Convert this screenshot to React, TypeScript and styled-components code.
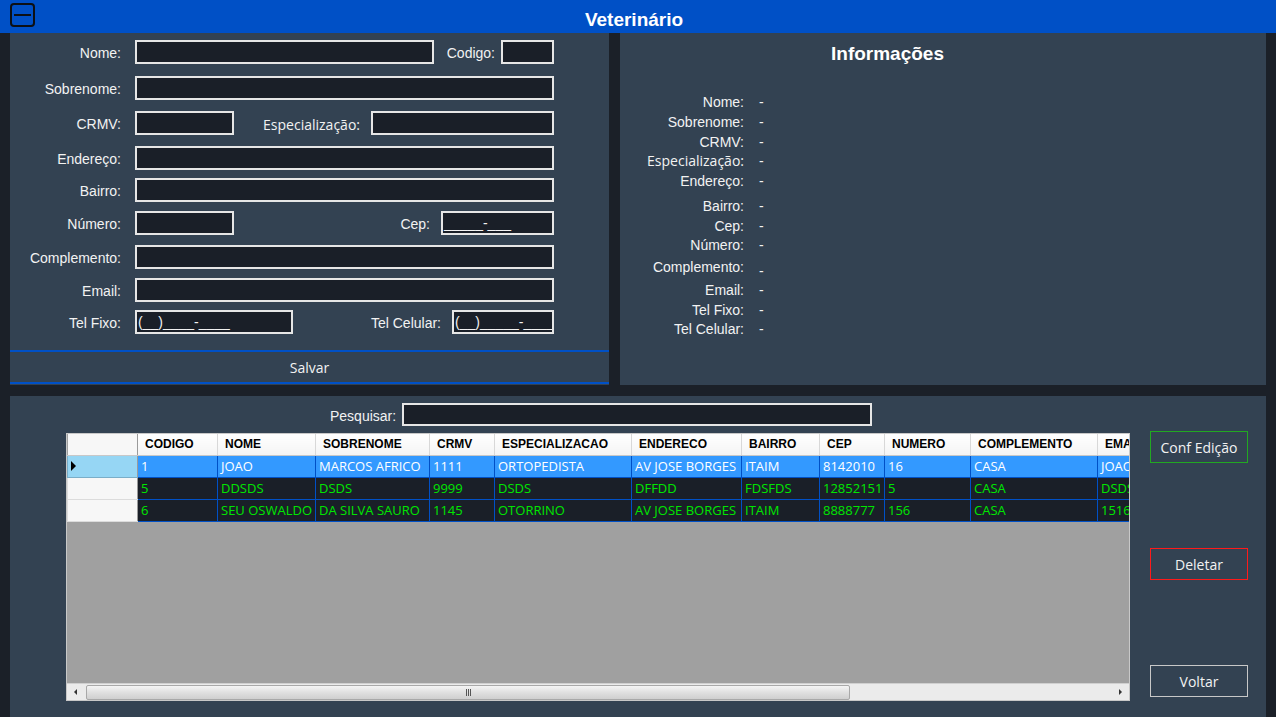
import React from "react";
import styled, { createGlobalStyle } from "styled-components";

const Global = createGlobalStyle`
  html, body { margin: 0; padding: 0; background: #1b2028; }
  body { width: 1276px; height: 717px; overflow: hidden; font-family: "Liberation Sans", Arial, sans-serif; }
  * { box-sizing: border-box; }
`;

const Window = styled.div`
  width: 1276px;
  height: 717px;
  background: #1b2028;
  display: flex;
  flex-direction: column;
`;

const TitleBar = styled.div`
  height: 33px;
  background: #0050c6;
  display: grid;
  grid-template-columns: 1fr auto 1fr;
  align-items: center;
`;

const TitleText = styled.div`
  color: #fff;
  font-weight: bold;
  font-size: 19px;
  padding-right: 8px;
  padding-top: 6px;
`;

const MinBtn = styled.div`
  margin-left: 10px;
  width: 25px;
  height: 24px;
  border: 2px solid #0d1014;
  border-radius: 4px;
  display: flex;
  align-items: center;
  justify-content: center;
  align-self: start;
  margin-top: 3px;
`;

const MinLine = styled.div`
  width: 17px;
  height: 2px;
  background: #0d1014;
`;

const Content = styled.div`
  flex: 1;
  display: flex;
  flex-direction: column;
  padding: 0 10px;
  gap: 11px;
`;

const TopRow = styled.div`
  display: flex;
  gap: 11px;
  height: 352px;
`;

const Panel = styled.div`
  background: #334252;
`;

const FormPanel = styled(Panel)`
  width: 599px;
  display: flex;
  flex-direction: column;
`;

const FormRow = styled.div<{ $mt: number }>`
  display: flex;
  align-items: center;
  height: 24px;
  margin-top: ${(p) => p.$mt}px;
`;

const Label = styled.div`
  width: 111px;
  text-align: right;
  color: #f2f2f2;
  font-size: 14px;
  margin-right: 14px;
  padding-top: 2px;
  white-space: nowrap;
`;

const InputArea = styled.div`
  width: 419px;
  display: flex;
  align-items: center;
  justify-content: space-between;
`;

const Group = styled.div<{ $gap: number }>`
  display: flex;
  align-items: center;
  gap: ${(p) => p.$gap}px;
`;

const InlineLabel = styled.span<{ $alt?: boolean }>`
  color: #f2f2f2;
  font-size: 14px;
  padding-top: 2px;
  font-family: ${(p) => (p.$alt ? `"Open Sans", "Noto Sans", sans-serif` : `"Liberation Sans", Arial, sans-serif`)};
  white-space: nowrap;
`;

const Field = styled.div<{ $w?: number }>`
  width: ${(p) => (p.$w ? `${p.$w}px` : "100%")};
  height: 24px;
  background: #1a1f28;
  border: 2px solid #e6e6e6;
  color: #f2f2f2;
  font-size: 14px;
  line-height: 20px;
  padding-left: 1px;
  white-space: nowrap;
  overflow: hidden;
`;

const SaveButton = styled.div`
  margin-top: auto;
  margin-bottom: 1px;
  height: 34px;
  border-top: 2px solid #0050c6;
  border-bottom: 2px solid #0050c6;
  display: flex;
  align-items: center;
  justify-content: center;
  color: #f2f2f2;
  font-family: "Open Sans", "Noto Sans", sans-serif;
  font-size: 14px;
`;

const InfoPanel = styled(Panel)`
  flex: 1;
  display: flex;
  flex-direction: column;
`;

const InfoTitle = styled.div`
  margin-top: 10px;
  padding-left: 211px;
  height: 22px;
  line-height: 22px;
  color: #fff;
  font-weight: bold;
  font-size: 19px;
`;

const InfoList = styled.div`
  margin-top: 29px;
  display: flex;
  flex-direction: column;
`;

const InfoRow = styled.div<{ $mt: number }>`
  display: flex;
  height: 16px;
  line-height: 16px;
  margin-top: ${(p) => p.$mt}px;
`;

const InfoLabel = styled.div<{ $alt?: boolean }>`
  width: 124px;
  text-align: right;
  color: #f2f2f2;
  font-size: 14px;
  font-family: ${(p) => (p.$alt ? `"Open Sans", "Noto Sans", sans-serif` : `"Liberation Sans", Arial, sans-serif`)};
  white-space: nowrap;
`;

const InfoValue = styled.div<{ $low?: boolean }>`
  margin-left: 15px;
  color: #f2f2f2;
  font-size: 14px;
  transform: translateY(${(p) => (p.$low ? 4 : 0)}px);
`;

const BottomPanel = styled(Panel)`
  flex: 1;
  display: flex;
  padding-left: 56px;
`;

const GridColumn = styled.div`
  width: 1064px;
  display: flex;
  flex-direction: column;
  padding-top: 7px;
`;

const SearchRow = styled.div`
  display: flex;
  align-items: center;
  padding-left: 264px;
  gap: 6px;
  height: 23px;
`;

const SearchField = styled(Field)`
  height: 23px;
`;

const GridBox = styled.div`
  margin-top: 7px;
  height: 268px;
  border: 1px solid #c8c8c8;
  display: flex;
  flex-direction: column;
  background: #a0a0a0;
`;

const TableArea = styled.div`
  flex: 1;
  overflow: hidden;
`;

const Table = styled.table`
  border-collapse: collapse;
  table-layout: fixed;
  width: 1180px;
`;

const HeadCell = styled.th`
  height: 21px;
  padding: 0 0 0 7px;
  text-align: left;
  font-family: "Liberation Sans", Arial, sans-serif;
  font-weight: bold;
  font-size: 12px;
  color: #000;
  background: linear-gradient(#ffffff, #f4f4f4);
  border-right: 1px solid #d8d8d8;
  border-bottom: 1px solid #c8c8c8;
  white-space: nowrap;
  overflow: hidden;
`;

const CornerCell = styled.th`
  background: #f7f7f7;
  border-right: 1px solid #9a9a9a;
  border-bottom: 1px solid #c8c8c8;
`;

const RowHead = styled.td<{ $sel?: boolean }>`
  height: 22px;
  padding: 0 0 0 3px;
  background: ${(p) => (p.$sel ? "#96d6f4" : "#f7f7f7")};
  border: 1px solid ${(p) => (p.$sel ? "#7aaec8" : "#dcdcdc")};
  border-right: 1px solid #9a9a9a;
  vertical-align: middle;
`;

const Cell = styled.td<{ $sel?: boolean }>`
  height: 22px;
  padding: 0 0 0 3px;
  border: 1px solid #0050c6;
  background: ${(p) => (p.$sel ? "#3399ff" : "#1a1f28")};
  color: ${(p) => (p.$sel ? "#ffffff" : "#00e600")};
  font-family: "Open Sans", "Noto Sans", sans-serif;
  font-size: 13px;
  line-height: 18px;
  white-space: nowrap;
  overflow: hidden;
`;

const Arrow = styled.div`
  width: 0;
  height: 0;
  border-top: 5px solid transparent;
  border-bottom: 5px solid transparent;
  border-left: 5px solid #000;
`;

const ScrollBar = styled.div`
  height: 17px;
  background: #ebebeb;
  border-top: 1px solid #d0d0d0;
  display: flex;
  align-items: center;
`;

const ScrollBtn = styled.div`
  width: 17px;
  height: 16px;
  display: flex;
  align-items: center;
  justify-content: center;
`;

const Tri = styled.div<{ $dir: "l" | "r" }>`
  width: 0;
  height: 0;
  border-top: 3px solid transparent;
  border-bottom: 3px solid transparent;
  ${(p) => (p.$dir === "l" ? "border-right: 3px solid #333;" : "border-left: 3px solid #333;")}
`;

const Thumb = styled.div`
  margin-left: 2px;
  width: 764px;
  height: 15px;
  border: 1px solid #a8a8a8;
  border-radius: 2px;
  background: linear-gradient(#f4f4f4, #e0e0e0 50%, #cfcfcf);
  display: flex;
  align-items: center;
  justify-content: center;
  gap: 1px;
`;

const Grip = styled.div`
  width: 1px;
  height: 7px;
  background: #555;
`;

const Spacer = styled.div`
  flex: 1;
`;

const ButtonColumn = styled.div`
  margin-left: 20px;
  padding-top: 35px;
  display: flex;
  flex-direction: column;
  gap: 85px;
`;

const ActionButton = styled.div<{ $color: string }>`
  width: 98px;
  height: 32px;
  border: 1px solid ${(p) => p.$color};
  display: flex;
  align-items: center;
  justify-content: center;
  color: #f2f2f2;
  font-family: "Open Sans", "Noto Sans", sans-serif;
  font-size: 14px;
`;

const cols = [70, 80, 98, 114, 65, 137, 110, 78, 65, 86, 127, 150];
const headers = ["CODIGO", "NOME", "SOBRENOME", "CRMV", "ESPECIALIZACAO", "ENDERECO", "BAIRRO", "CEP", "NUMERO", "COMPLEMENTO", "EMAIL"];
const rows = [
  ["1", "JOAO", "MARCOS AFRICO", "1111", "ORTOPEDISTA", "AV JOSE BORGES", "ITAIM", "8142010", "16", "CASA", "JOAO@EMAIL.COM"],
  ["5", "DDSDS", "DSDS", "9999", "DSDS", "DFFDD", "FDSFDS", "12852151", "5", "CASA", "DSDSDS@EMAIL"],
  ["6", "SEU OSWALDO", "DA SILVA SAURO", "1145", "OTORRINO", "AV JOSE BORGES", "ITAIM", "8888777", "156", "CASA", "15165165165"],
];

const info: { label: string; mt: number; alt?: boolean; low?: boolean }[] = [
  { label: "Nome:", mt: 0 },
  { label: "Sobrenome:", mt: 4 },
  { label: "CRMV:", mt: 4 },
  { label: "Especialização:", mt: 3, alt: true },
  { label: "Endereço:", mt: 4 },
  { label: "Bairro:", mt: 9 },
  { label: "Cep:", mt: 4 },
  { label: "Número:", mt: 3 },
  { label: "Complemento:", mt: 6, low: true },
  { label: "Email:", mt: 7 },
  { label: "Tel Fixo:", mt: 4 },
  { label: "Tel Celular:", mt: 3 },
];

export default function App() {
  return (
    <Window>
      <Global />
      <TitleBar>
        <MinBtn>
          <MinLine />
        </MinBtn>
        <TitleText>Veterinário</TitleText>
        <div />
      </TitleBar>
      <Content>
        <TopRow>
          <FormPanel>
            <FormRow $mt={7}>
              <Label>Nome:</Label>
              <InputArea>
                <Field $w={299} />
                <Group $gap={6}>
                  <InlineLabel>Codigo:</InlineLabel>
                  <Field $w={53} />
                </Group>
              </InputArea>
            </FormRow>
            <FormRow $mt={12}>
              <Label>Sobrenome:</Label>
              <InputArea>
                <Field />
              </InputArea>
            </FormRow>
            <FormRow $mt={11}>
              <Label>CRMV:</Label>
              <InputArea>
                <Field $w={99} />
                <Group $gap={11}>
                  <InlineLabel $alt>Especialização:</InlineLabel>
                  <Field $w={183} />
                </Group>
              </InputArea>
            </FormRow>
            <FormRow $mt={11}>
              <Label>Endereço:</Label>
              <InputArea>
                <Field />
              </InputArea>
            </FormRow>
            <FormRow $mt={8}>
              <Label>Bairro:</Label>
              <InputArea>
                <Field />
              </InputArea>
            </FormRow>
            <FormRow $mt={9}>
              <Label>Número:</Label>
              <InputArea>
                <Field $w={99} />
                <Group $gap={11}>
                  <InlineLabel>Cep:</InlineLabel>
                  <Field $w={113}>_____-___</Field>
                </Group>
              </InputArea>
            </FormRow>
            <FormRow $mt={10}>
              <Label>Complemento:</Label>
              <InputArea>
                <Field />
              </InputArea>
            </FormRow>
            <FormRow $mt={9}>
              <Label>Email:</Label>
              <InputArea>
                <Field />
              </InputArea>
            </FormRow>
            <FormRow $mt={8}>
              <Label>Tel Fixo:</Label>
              <InputArea>
                <Field $w={158}>(__)____-____</Field>
                <Group $gap={11}>
                  <InlineLabel>Tel Celular:</InlineLabel>
                  <Field $w={102}>(__)_____-____</Field>
                </Group>
              </InputArea>
            </FormRow>
            <SaveButton>Salvar</SaveButton>
          </FormPanel>
          <InfoPanel>
            <InfoTitle>Informações</InfoTitle>
            <InfoList>
              {info.map((r) => (
                <InfoRow key={r.label} $mt={r.mt}>
                  <InfoLabel $alt={r.alt}>{r.label}</InfoLabel>
                  <InfoValue $low={r.low}>-</InfoValue>
                </InfoRow>
              ))}
            </InfoList>
          </InfoPanel>
        </TopRow>
        <BottomPanel>
          <GridColumn>
            <SearchRow>
              <InlineLabel>Pesquisar:</InlineLabel>
              <SearchField $w={470} />
            </SearchRow>
            <GridBox>
              <TableArea>
                <Table>
                  <colgroup>
                    {cols.map((w, i) => (
                      <col key={i} style={{ width: w }} />
                    ))}
                  </colgroup>
                  <thead>
                    <tr>
                      <CornerCell />
                      {headers.map((h) => (
                        <HeadCell key={h}>{h}</HeadCell>
                      ))}
                    </tr>
                  </thead>
                  <tbody>
                    {rows.map((r, i) => (
                      <tr key={i}>
                        <RowHead $sel={i === 0}>{i === 0 && <Arrow />}</RowHead>
                        {r.map((c, j) => (
                          <Cell key={j} $sel={i === 0}>
                            {c}
                          </Cell>
                        ))}
                      </tr>
                    ))}
                  </tbody>
                </Table>
              </TableArea>
              <ScrollBar>
                <ScrollBtn>
                  <Tri $dir="l" />
                </ScrollBtn>
                <Thumb>
                  <Grip />
                  <Grip />
                  <Grip />
                </Thumb>
                <Spacer />
                <ScrollBtn>
                  <Tri $dir="r" />
                </ScrollBtn>
              </ScrollBar>
            </GridBox>
          </GridColumn>
          <ButtonColumn>
            <ActionButton $color="#22a822">Conf Edição</ActionButton>
            <ActionButton $color="#ff1a1a">Deletar</ActionButton>
            <ActionButton $color="#c8c8c8">Voltar</ActionButton>
          </ButtonColumn>
        </BottomPanel>
      </Content>
    </Window>
  );
}
